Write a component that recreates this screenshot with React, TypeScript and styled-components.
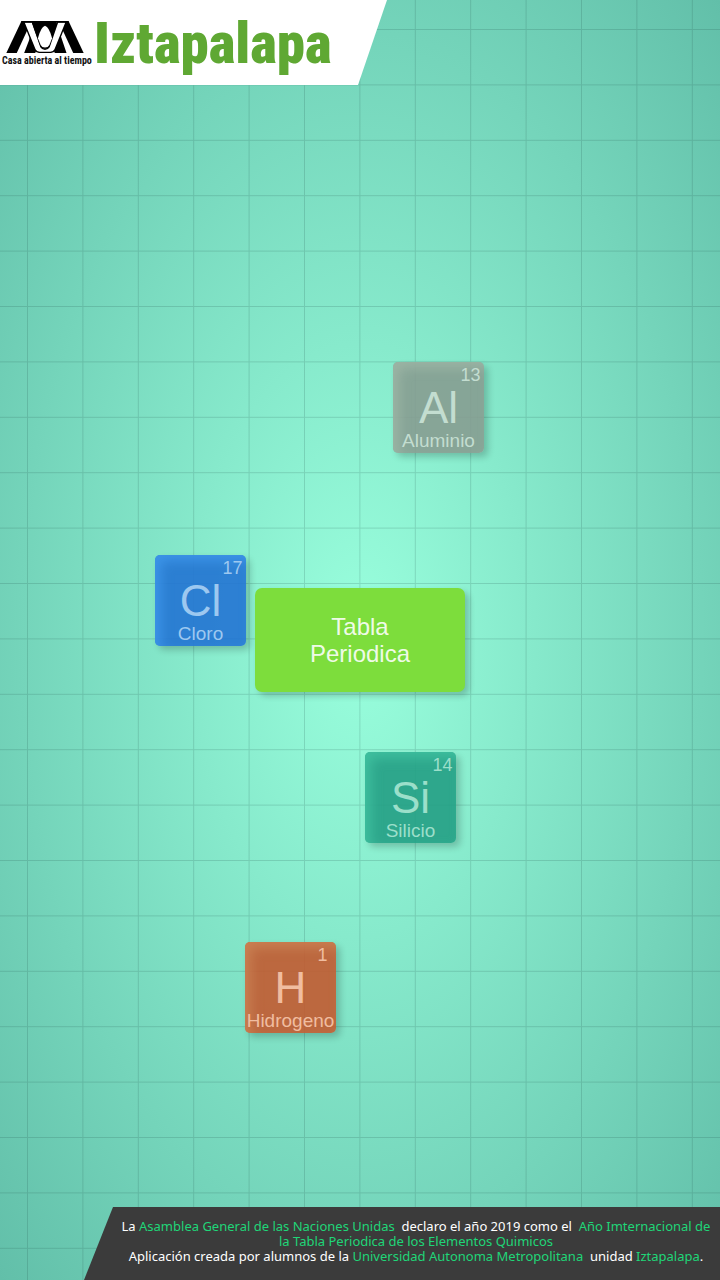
import React from "react";
import styled, { createGlobalStyle } from "styled-components";

const GlobalStyle = createGlobalStyle`
  * { box-sizing: border-box; }
  body { margin: 0; background: #62bfa9; }
`;

const Page = styled.div`
  position: relative;
  display: flex;
  flex-direction: column;
  justify-content: space-between;
  min-height: 100vh;
  overflow: hidden;
  font-family: "Liberation Sans", Arial, sans-serif;
  background: radial-gradient(farthest-corner at center, #99ffdd 0%, #62bfa9 100%);
`;

const GridLines = styled.svg`
  position: absolute;
  inset: 0;
  width: 100%;
  height: 100%;
`;

const Header = styled.header`
  position: relative;
  display: flex;
  align-items: flex-start;
  gap: 3px;
  width: 387px;
  height: 85px;
  padding-left: 2px;
  background: #fff;
  clip-path: polygon(0 0, 100% 0, 358px 100%, 0 100%);
`;

const Emblem = styled.div`
  display: flex;
  flex-direction: column;
  width: 89px;
  padding-top: 20px;
`;

const Mark = styled.svg`
  width: 78px;
  height: 33px;
  margin-left: 4px;
`;

const Motto = styled.span`
  font: bold 10px/15px "Roboto Condensed", Roboto, sans-serif;
  white-space: nowrap;
  color: #111;
`;

const Campus = styled.span`
  padding-top: 10px;
  font: 900 57px/68px "Roboto Condensed", Roboto, sans-serif;
  color: #5fa833;
`;

const Canvas = styled.main`
  position: absolute;
  inset: 0;
`;

const TableButton = styled.button`
  position: absolute;
  left: 50%;
  top: 50%;
  width: 210px;
  height: 104px;
  padding: 0 40px;
  transform: translate(-50%, -50%);
  border: 0;
  border-radius: 7px;
  background: #7ddd3c;
  box-shadow: 4px 4px 6px rgba(0, 0, 0, 0.2);
  color: rgba(255, 255, 255, 0.9);
  font: 24px/27px "Liberation Sans", Arial, sans-serif;
`;

const Tile = styled.article<{ $x: number; $y: number; $color: string; $edge: string; $ink: string }>`
  position: absolute;
  left: ${(p) => p.$x}px;
  top: ${(p) => p.$y}px;
  display: flex;
  flex-direction: column;
  align-items: center;
  width: 91px;
  height: 91px;
  border-radius: 5px;
  background: ${(p) => p.$color};
  box-shadow: 4px 4px 7px rgba(0, 0, 0, 0.2), inset 6px 6px 12px ${(p) => p.$edge};
  color: ${(p) => p.$ink};
  white-space: nowrap;
`;

const AtomicNumber = styled.span`
  align-self: flex-end;
  width: 27px;
  text-align: center;
  font-size: 18px;
  line-height: 26px;
`;

const Symbol = styled.span`
  font-size: 44px;
  line-height: 40px;
`;

const ElementName = styled.span`
  font-size: 19px;
  line-height: 26px;
`;

const Footer = styled.footer`
  position: relative;
  align-self: flex-end;
  width: calc(100% - 84px);
  min-height: 73px;
  padding: 12px 8px 15px 36px;
  background: #3b3b3b;
  clip-path: polygon(29px 0, 100% 0, 100% 100%, 0 100%);
  font: 13px/15px "Noto Sans", sans-serif;
  text-align: center;
  color: #fff;

  p { margin: 0; }
`;

const FooterLink = styled.a`
  color: #1fd678;
  text-decoration: none;
`;

const elements = [
  { number: 13, symbol: "Al", name: "Aluminio", x: 393, y: 362, color: "rgba(134, 155, 143, 0.88)", edge: "rgba(160, 184, 167, 0.8)", ink: "#c3ddd0" },
  { number: 17, symbol: "Cl", name: "Cloro", x: 155, y: 555, color: "rgba(34, 115, 211, 0.9)", edge: "rgba(64, 152, 236, 0.8)", ink: "#9dc8f0" },
  { number: 14, symbol: "Si", name: "Silicio", x: 365, y: 752, color: "rgba(36, 158, 132, 0.9)", edge: "rgba(66, 196, 163, 0.8)", ink: "#9bdfca" },
  { number: 1, symbol: "H", name: "Hidrogeno", x: 245, y: 942, color: "rgba(194, 90, 48, 0.9)", edge: "rgba(204, 132, 86, 0.8)", ink: "#f0bda0" },
];

export default function App() {
  return (
    <Page>
      <GlobalStyle />
      <GridLines aria-hidden="true">
        <defs>
          <pattern id="grid" width="55.4" height="55.4" x="27" y="29" patternUnits="userSpaceOnUse">
            <path d="M.5 0V55.4M0 .5H55.4" stroke="#1c4a42" strokeOpacity=".18" />
          </pattern>
        </defs>
        <rect width="100%" height="100%" fill="url(#grid)" />
      </GridLines>
      <Canvas>
        {elements.map((e) => (
          <Tile key={e.symbol} $x={e.x} $y={e.y} $color={e.color} $edge={e.edge} $ink={e.ink}>
            <AtomicNumber>{e.number}</AtomicNumber>
            <Symbol>{e.symbol}</Symbol>
            <ElementName>{e.name}</ElementName>
          </Tile>
        ))}
        <TableButton type="button">Tabla Periodica</TableButton>
      </Canvas>
      <Header>
        <Emblem>
          <Mark viewBox="20 60 232 98" aria-hidden="true">
            <path d="M66 63H96L52 158H21Z" />
            <path d="M206 63H176L220 158H251Z" />
            <path d="M104 63H168L200 158H165L136 76L107 158H74L88 122Z" />
            <path d="M71 65H101L126 138Q130 145 136 145T146 138L171 65H201L168 150Q164 158 154 158H118Q108 158 104 150Z" />
            <path d="M76 68H97L122 141Q127 149 136 149T150 141L175 68H196L164 147Q161 154 152 154H120Q111 154 108 147Z" fill="#fff" />
            <path d="M101 63H171L150 138Q145 146 136 146T122 138L97 68Z" />
            <path d="M136 77Q124 80 115 114L123 134Q127 142 136 142T149 134L157 114Q148 80 136 77Z" fill="#fff" />
            <path d="M66 63H206V67H66Z" />
          </Mark>
          <Motto>Casa abierta al tiempo</Motto>
        </Emblem>
        <Campus>Iztapalapa</Campus>
      </Header>
      <Footer>
        <p>
          La <FooterLink href="#onu">Asamblea General de las Naciones Unidas</FooterLink>&nbsp; declaro el año 2019 como el&nbsp;{" "}
          <FooterLink href="#tabla">Año Imternacional de la Tabla Periodica de los Elementos Quimicos</FooterLink>
        </p>
        <p>
          Aplicación creada por alumnos de la <FooterLink href="#uam">Universidad Autonoma Metropolitana</FooterLink>&nbsp; unidad{" "}
          <FooterLink href="#izt">Iztapalapa</FooterLink>.
        </p>
      </Footer>
    </Page>
  );
}
